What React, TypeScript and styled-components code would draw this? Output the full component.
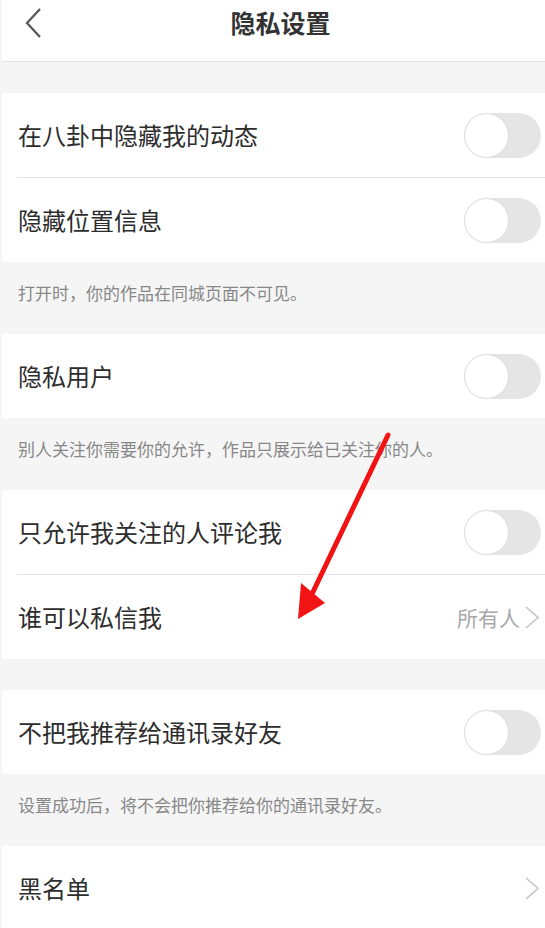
import React from "react";
import styled, { createGlobalStyle } from "styled-components";

const GlobalStyle = createGlobalStyle`
  html, body {
    margin: 0;
    padding: 0;
    background: #f5f5f5;
  }
  body {
    font-family: "Noto Sans CJK SC", "Noto Sans", sans-serif;
  }
`;

type RowItem = {
  label: string;
  kind: "toggle" | "link";
  value?: string;
};

type Group = {
  rows: RowItem[];
  note?: string;
};

const groups: Group[] = [
  {
    rows: [
      { label: "在八卦中隐藏我的动态", kind: "toggle" },
      { label: "隐藏位置信息", kind: "toggle" },
    ],
    note: "打开时，你的作品在同城页面不可见。",
  },
  {
    rows: [{ label: "隐私用户", kind: "toggle" }],
    note: "别人关注你需要你的允许，作品只展示给已关注你的人。",
  },
  {
    rows: [
      { label: "只允许我关注的人评论我", kind: "toggle" },
      { label: "谁可以私信我", kind: "link", value: "所有人" },
    ],
  },
  {
    rows: [{ label: "不把我推荐给通讯录好友", kind: "toggle" }],
    note: "设置成功后，将不会把你推荐给你的通讯录好友。",
  },
  {
    rows: [{ label: "黑名单", kind: "link" }],
  },
];

function Chevron() {
  return (
    <ChevronSvg width="16" height="23" viewBox="0 0 16 23">
      <polyline
        points="2,1 14,11.5 2,22"
        fill="none"
        stroke="#c4c4c4"
        strokeWidth="1.6"
      />
    </ChevronSvg>
  );
}

function App() {
  return (
    <Page>
      <GlobalStyle />
      <Header>
        <BackButton>
          <svg width="18" height="30" viewBox="0 0 18 30">
            <polyline
              points="16,1 3,15 16,29"
              fill="none"
              stroke="#555"
              strokeWidth="2.2"
            />
          </svg>
        </BackButton>
        <Title>隐私设置</Title>
      </Header>
      <Gap />
      {groups.map((g, gi) => (
        <React.Fragment key={gi}>
          <Section>
            {g.rows.map((r, ri) => (
              <Row key={r.label} divided={ri > 0}>
                <Label>{r.label}</Label>
                {r.kind === "toggle" ? (
                  <Toggle>
                    <Knob />
                  </Toggle>
                ) : (
                  <LinkSide>
                    {r.value && <Value>{r.value}</Value>}
                    <Chevron />
                  </LinkSide>
                )}
              </Row>
            ))}
          </Section>
          {g.note ? <Note>{g.note}</Note> : gi < groups.length - 1 && <Gap />}
        </React.Fragment>
      ))}
      <Arrow width="545" height="928" viewBox="0 0 545 928">
        <line
          x1="388"
          y1="435"
          x2="312"
          y2="594"
          stroke="#f21414"
          strokeWidth="5"
          strokeLinecap="round"
        />
        <polygon points="298,619 301,583 325,603" fill="#f21414" />
      </Arrow>
    </Page>
  );
}

const Page = styled.div`
  position: relative;
  width: 545px;
  min-height: 928px;
  padding-left: 2px;
  box-sizing: border-box;
  overflow: hidden;
  background: #f5f5f5;
`;

const Header = styled.div`
  position: relative;
  height: 61px;
  background: #fff;
  border-bottom: 1px solid #e2e2e2;
  display: flex;
  align-items: flex-start;
  justify-content: center;
`;

const BackButton = styled.div`
  position: absolute;
  left: 22px;
  top: 8px;
  display: flex;
`;

const Title = styled.div`
  font-size: 25px;
  line-height: 32px;
  padding-top: 6px;
  font-weight: 700;
  color: #333;
  margin-left: 14px;
`;

const Gap = styled.div`
  height: 31px;
`;

const Section = styled.div`
  background: #fff;
`;

const Row = styled.div<{ divided: boolean }>`
  display: flex;
  align-items: center;
  justify-content: space-between;
  height: 84px;
  padding: 0 4px 0 16px;
  ${(p) =>
    p.divided &&
    `
    border-top: 1px solid #e4e4e4;
    margin-left: 15px;
    padding-left: 1px;
  `}
`;

const Label = styled.div`
  font-size: 24px;
  color: #2d2d2d;
  line-height: 1;
`;

const Toggle = styled.div`
  width: 77px;
  height: 45px;
  border-radius: 23px;
  background: #e5e5e5;
  display: flex;
  align-items: center;
`;

const Knob = styled.div`
  width: 43px;
  height: 43px;
  border-radius: 50%;
  background: #fff;
  border: 1.5px solid #dedede;
`;

const LinkSide = styled.div`
  display: flex;
  align-items: center;
  gap: 4px;
  padding-right: 1px;
`;

const Value = styled.span`
  font-size: 21px;
  color: #a8a8a8;
`;

const ChevronSvg = styled.svg`
  display: block;
`;

const Note = styled.div`
  height: 72px;
  box-sizing: border-box;
  padding: 20px 0 0 16px;
  font-size: 17px;
  line-height: 22px;
  color: #888;
`;

const Arrow = styled.svg`
  position: absolute;
  left: 0;
  top: 0;
  pointer-events: none;
`;

export default App;
